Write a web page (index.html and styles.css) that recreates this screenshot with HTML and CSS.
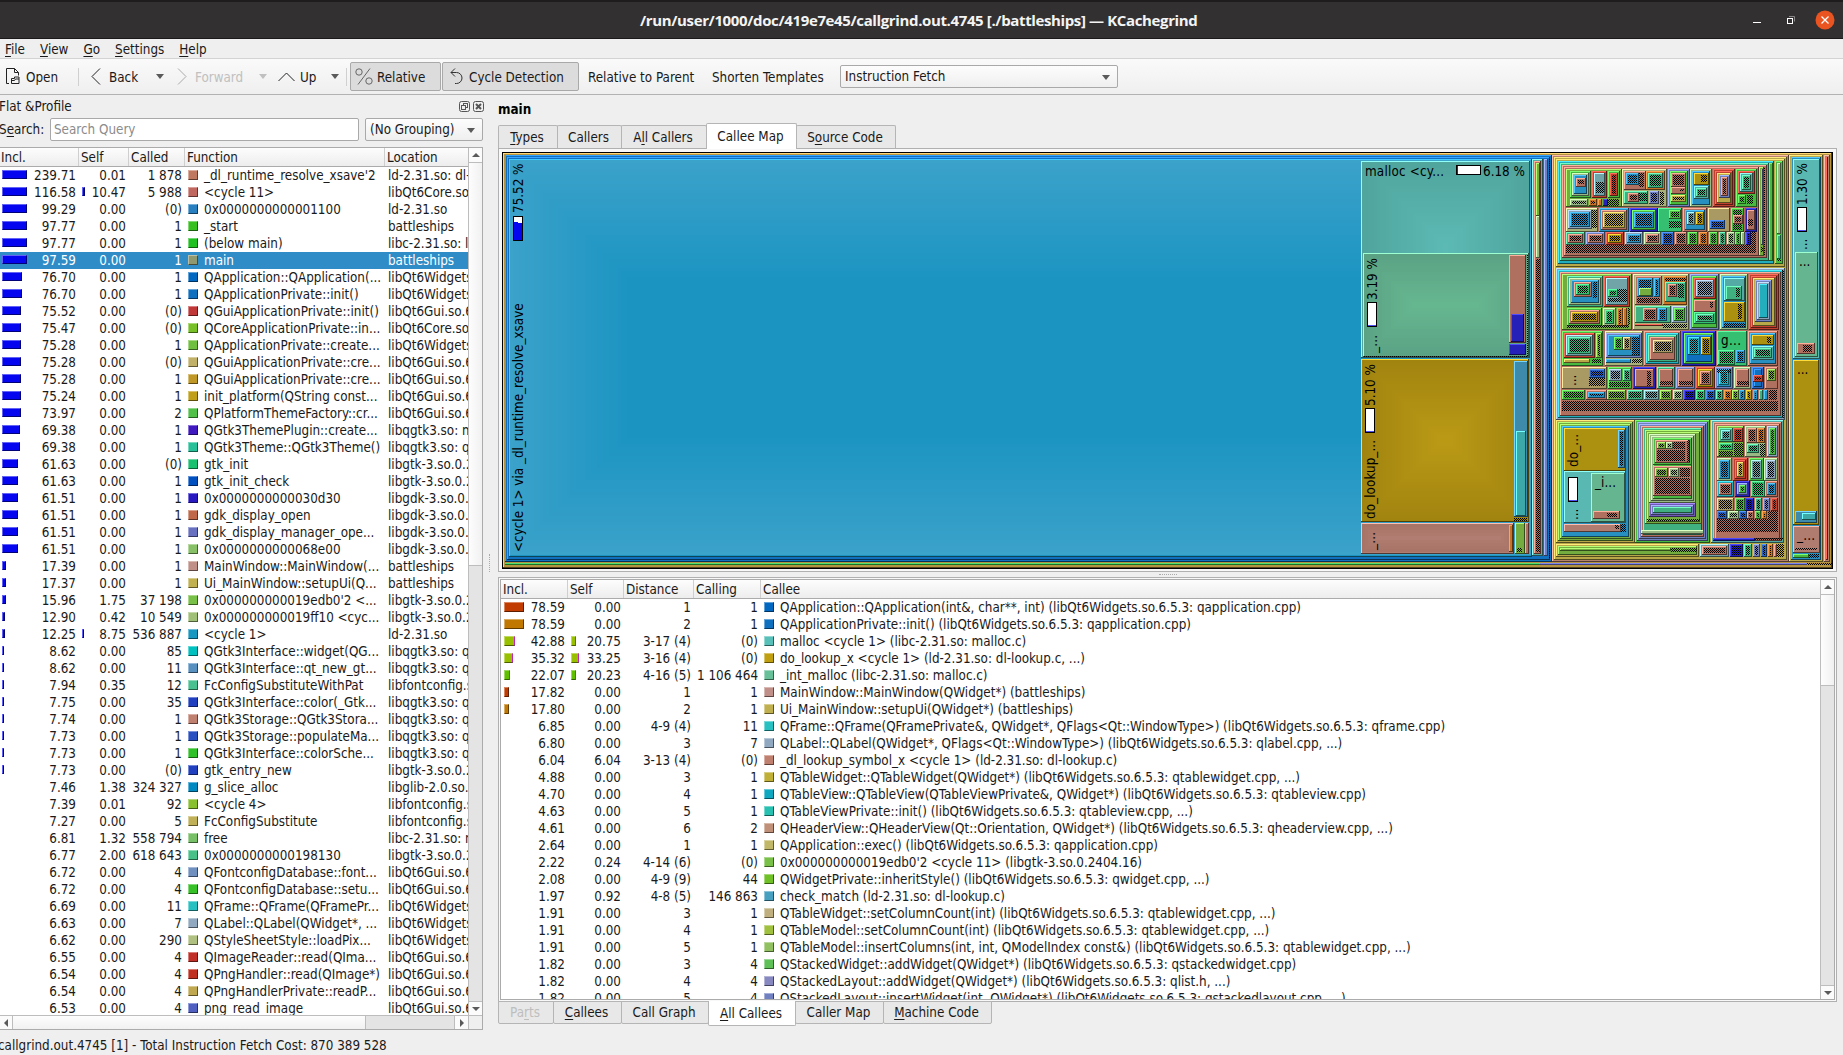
FILE: index.html
```html
<!DOCTYPE html>
<html lang="en">
<head>
<meta charset="utf-8">
<title>KCachegrind</title>
<link rel="stylesheet" href="styles.css">
</head>
<body>
<header class="titlebar">
  <h1 class="title">/run/user/1000/doc/419e7e45/callgrind.out.4745 [./battleships] — KCachegrind</h1>
  <svg class="winbtns" width="90" height="38" viewBox="0 0 90 38">
    <path d="M0 22.500h8" stroke="#fff"/>
    <path d="M36 16.500h5.500v5" fill="none" stroke="#8a8888"/>
    <rect x="34.500" y="18.500" width="5" height="5" fill="none" stroke="#fff"/>
    <circle cx="72" cy="20" r="9.500" fill="#e95420"/>
    <path d="M68.500 16.500l7 7m0-7l-7 7" stroke="#fff" stroke-width="1.300"/>
  </svg>
</header>
<nav class="menubar"><span><u>F</u>ile</span><span><u>V</u>iew</span><span><u>G</u>o</span><span><u>S</u>ettings</span><span><u>H</u>elp</span></nav>
<div class="toolbar">
  <div class="tool open"><svg width="16" height="17" viewBox="0 0 16 17" fill="none" stroke="#222"><path d="M4 15.500H1.500V.500h8l4 4v3M9.500.500v4h4"/><path d="M6.500 15.500v-5h3v-1.500h4.500v6.500zM6.500 12.500h3l1-1.500h3.500" /></svg><span>Open</span></div>
  <i class="sep"></i>
  <div class="tool back"><svg width="10" height="17" viewBox="0 0 10 17" fill="none" stroke="#222"><path d="M9 .500L1 8.500l8 8"/></svg><span>Back</span><i class="caret"></i></div>
  <div class="tool fwd"><svg width="10" height="17" viewBox="0 0 10 17" fill="none" stroke="#aaa"><path d="M1 .500l8 8-8 8"/></svg><span>Forward</span><i class="caret"></i></div>
  <div class="tool up"><svg width="17" height="10" viewBox="0 0 17 10" fill="none" stroke="#222"><path d="M.500 9l8-8 8 8"/></svg><span>Up</span><i class="caret"></i></div>
  <i class="sep s2"></i>
  <div class="tool pressed rel"><svg width="18" height="17" viewBox="0 0 18 17" fill="none" stroke="#666"><circle cx="4" cy="4" r="3.200"/><circle cx="14" cy="13" r="3.200"/><path d="M15 .500L3 16.500"/></svg><span>Relative</span></div>
  <div class="tool pressed cyc"><svg width="14" height="17" viewBox="0 0 14 17" fill="none" stroke="#333"><path d="M5 .500L1 4.500l4 4M1 4.500h5.500a5.500 5.500 0 0 1 0 11H5"/></svg><span>Cycle Detection</span></div>
  <div class="tool rtp"><span>Relative to Parent</span></div>
  <div class="tool sht"><span>Shorten Templates</span></div>
  <div class="combo fetch">Instruction Fetch<i class="caret"></i></div>
</div>
<main class="work">
  <section class="dock">
    <div class="dock-title"><span>Flat &amp;Profile</span>
      <svg width="26" height="12" viewBox="0 0 26 12" fill="none" stroke="#555"><rect x=".500" y=".500" width="10" height="10" rx="2"/><rect x="4.500" y="2.500" width="4" height="4"/><rect x="2.500" y="4.500" width="4" height="4" fill="#efefef"/><rect x="14.500" y=".500" width="10" height="10" rx="2"/><path d="M17 3l5 5m0-5l-5 5" stroke-width="2"/></svg></div>
    <div class="search"><label>S<u>e</u>arch:</label><div class="field">Search Query</div><div class="combo group">(No Grouping)<i class="caret"></i></div></div>
    <div class="list flat">
      <div class="listbody">
        <div class="head"><span>Incl.</span><span>Self</span><span>Called</span><span>Function</span><span>Location</span></div>
        <div class="rows" id="flat"></div>
      </div>
      <div class="vbar"><b class="btn up"></b><b class="handle"></b><b class="groove"></b><b class="btn dn"></b></div>
      <div class="hbar"><b class="btn lf"></b><b class="handle"></b><b class="groove"></b><b class="btn rt"></b></div>
      <div class="corner"></div>
    </div>
  </section>
  <div class="vsplit"></div>
  <section class="side">
    <h2>main</h2>
    <div class="tabs top"><span><u>T</u>ypes</span><span>Callers</span><span>A<u>l</u>l Callers</span><span class="on">Callee Map</span><span>S<u>o</u>urce Code</span></div>
    <div class="pane"><svg id="map" width="1331" height="417" viewBox="502 152 1331 417" shape-rendering="crispEdges"></svg></div>
    <div class="hsplit"></div>
    <div class="pane low">
      <div class="list callees">
        <div class="listbody">
          <div class="head"><span>Incl.</span><span>Self</span><span>Distance</span><span>Calling</span><span>Callee</span></div>
          <div class="rows" id="callees"></div>
        </div>
        <div class="vbar"><b class="btn up"></b><b class="handle"></b><b class="groove"></b><b class="btn dn"></b></div>
      </div>
    </div>
    <div class="tabs bottom"><span class="off">Pa<u>r</u>ts</span><span><u>C</u>allees</span><span>Call Graph</span><span class="on"><u>A</u>ll Callees</span><span>Caller Map</span><span><u>M</u>achine Code</span></div>
  </section>
</main>
<footer class="status">callgrind.out.4745 [1] - Total Instruction Fetch Cost: 870 389 528</footer>
<script src="app.js"></script>
</body>
</html>
```
FILE: styles.css
```css
* { box-sizing: border-box; }
body {
  margin: 0; width: 1843px; height: 1055px; overflow: hidden;
  display: flex; flex-direction: column;
  background: #efefef; color: #1a1a1a;
  font: 13.33px/16px "DejaVu Sans Condensed", "DejaVu Sans", sans-serif;
  font-stretch: condensed; white-space: nowrap;
}
h1, h2 { margin: 0; }
u { text-underline-offset: 2px; text-decoration-thickness: 1px; }

.titlebar {
  height: 39px; flex: none; display: flex; align-items: center; justify-content: flex-end;
  background: #333031; border-top: 2px solid #1f1c1d; border-bottom: 1px solid #1b1919;
}
.title { width: 557px; margin-right: 556px; color: #f4f4f4; font: bold 15px/20px "Open Sans", "Noto Sans", sans-serif; letter-spacing: -0.37px; }
.winbtns { margin: -2px 0 0; width: 90px; }

.menubar { height: 20px; flex: none; display: flex; gap: 15px; padding: 3px 5px 0; border-bottom: 1px solid #d3d3d3; }

.toolbar {
  height: 36px; flex: none; display: flex; align-items: center;
  background: linear-gradient(#fafafa, #efefef); border-bottom: 1px solid #b2b2b2;
}
.tool { display: flex; align-items: center; height: 29px; }
.tool span { padding-top: 2px; }
.tool svg { flex: none; }
.open { margin-left: 5px; width: 73px; gap: 5px; }
.sep { width: 1px; height: 18px; background: #d0d0d0; }
.back { width: 98px; padding-left: 12px; gap: 8px; }
.back .caret { margin-left: 10px; }
.fwd { width: 101px; gap: 8px; color: #c0c0c0; }
.fwd .caret { margin-left: 8px; border-top-color: #c0c0c0; }
.up.tool { width: 68px; gap: 5px; }
.up .caret { margin-left: 10px; }
.caret { width: 0; height: 0; border: 4px solid transparent; border-top: 5px solid #5a5a5a; border-bottom: 0; }
.pressed { background: #dcdcdc; border: 1px solid #a9a9a9; border-radius: 2px; }
.rel { margin-left: 3px; width: 91px; padding-left: 4px; gap: 4px; }
.cyc { margin-left: 1px; width: 137px; padding-left: 7px; gap: 5px; }
.rtp { margin-left: 9px; width: 124px; }
.sht { width: 128px; }
.combo {
  display: flex; align-items: center; justify-content: space-between; height: 23px; padding: 1px 7px 0 4px;
  border: 1px solid #a9a9a9; border-radius: 2px; background: linear-gradient(#fdfdfd, #efefef);
}
.fetch { width: 278px; }

.work { flex: 1; min-height: 0; display: flex; }
.dock { width: 484px; flex: none; display: flex; flex-direction: column; }
.dock-title { height: 23px; display: flex; justify-content: space-between; align-items: center; margin-left: -1px; margin-right: -1px; }
.search { height: 23px; display: flex; align-items: center; }
.search label { width: 50px; flex: none; margin-left: -1px; }
.field { width: 309px; height: 23px; margin-left: 1px; margin-right: 6px; padding: 3px; border: 1px solid #a9a9a9; border-radius: 2px; background: #fff; color: #8c8c8c; }
.group { width: 118px; }

.list { display: grid; grid-template-columns: 1fr 14px; background: #fff; border: 1px solid #ababab; }
.listbody { overflow: hidden; min-width: 0; min-height: 0; }
.flat { margin-top: 6px; width: 483px; height: 883px; border-left: 0; grid-template-rows: 867px 14px; }
.head { display: grid; height: 19px; background: linear-gradient(#fdfdfd, #ededed); border-bottom: 1px solid #ababab; }
.head span { padding: 2px 0 0 2px; border-right: 1px solid #cfcfcf; }
.head span:last-child { border: 0; }
.flat .head { grid-template-columns: 79px 50px 56px 200px 1fr; }
.flat .head span:first-child { padding-left: 1px; }
.rows { overflow: hidden; }
.row { display: grid; height: 17px; align-items: start; }
.row > span { overflow: hidden; height: 17px; padding-top: 1px; }
.row .num { display: flex; justify-content: space-between; padding: 1px 3px 0 2px; }
.flat .row { grid-template-columns: 79px 50px 56px 200px 1fr; }
.flat .row .loc { padding-left: 3px; }
.flat .num { padding-left: 2px; }
.flat .num + .num { padding-left: 3px; }
.row .fn { display: flex; gap: 6px; padding-left: 3px; }
.chip, .bar { display: block; flex: none; margin-top: 2px; height: 10px; border: 1px solid; border-color: #ffffff60 #00000080 #00000080 #ffffff60; }
.chip { width: 10px; }
.bar { height: 9px; }
.row.sel { background: #308cc6; color: #fff; }

.vbar, .hbar { display: flex; background: #e4e4e4; }
.vbar { flex-direction: column; border-left: 1px solid #bdbdbd; }
.hbar { border-top: 1px solid #bdbdbd; }
.corner { background: #efefef; border: solid #bdbdbd; border-width: 1px 0 0 1px; }
.btn, .vbar .handle, .hbar .handle { background: #fbfbfb; }
.btn { display: flex; align-items: center; justify-content: center; flex: none; width: 14px; height: 14px; }
.btn::after { content: ""; border: 4px solid transparent; }
.btn.up::after { border-top: 0; border-bottom: 4px solid #5a5a5a; }
.btn.dn::after { border-bottom: 0; border-top: 4px solid #5a5a5a; }
.btn.lf::after { border-left: 0; border-right: 4px solid #5a5a5a; }
.btn.rt::after { border-right: 0; border-left: 4px solid #5a5a5a; }
.vbar .btn { width: 13px; }
.vbar .handle { border: solid #bdbdbd; border-width: 1px 0; background: linear-gradient(90deg, #fdfdfd, #f1f1f1); }
.hbar .handle { border: solid #bdbdbd; border-width: 0 1px; background: linear-gradient(#fdfdfd, #f1f1f1); width: 354px; }
.hbar .btn { height: 13px; }
.hbar .btn.lf { width: 12px; }
.hbar .btn.rt { border-left: 1px solid #bdbdbd; }
.groove { flex: 1; }
.btn.dn { border-top: 1px solid #bdbdbd; }
.flat .handle { flex: none; }
.flat .vbar .handle { height: 404px; }

.vsplit { width: 14px; display: flex; align-items: center; justify-content: center; }
.vsplit::after { content: ""; height: 18px; border-left: 1px dotted #aaa; margin: 0 0 0 -4px; }

.side { width: 1339px; display: flex; flex-direction: column; }
.side h2 { height: 28px; padding: 7px 0 0; font-size: 13.33px; line-height: 16px; color: #000; }
.tabs { display: flex; flex: none; }
.tabs span { border: 1px solid #b5b5b5; background: #e8e8e8; text-align: center; margin-right: -1px; padding-right: 2px; }
.tabs .on { background: #fff; position: relative; }
.tabs.top { height: 25px; align-items: flex-end; }
.tabs.top span { height: 23px; padding-top: 4px; border-radius: 2px 2px 0 0; border-bottom: 0; }
.tabs.top .on { height: 26px; margin-bottom: -1px; padding-top: 5px; }
.tabs.top span:nth-child(1) { width: 60px; }
.tabs.top span:nth-child(2) { width: 65px; }
.tabs.top span:nth-child(3) { width: 86px; }
.tabs.top span:nth-child(4) { width: 91px; }
.tabs.top span:nth-child(5) { width: 100px; }
.pane { flex: none; border: 1px solid #b0b0b0; background: #f8f8f8; height: 424px; padding: 3px; }
#map { display: block; font: 13.33px "DejaVu Sans Condensed", "DejaVu Sans", sans-serif; font-stretch: condensed; }
.hsplit { height: 5px; display: flex; justify-content: center; align-items: center; }
.hsplit::after { content: ""; width: 18px; border-top: 1px dotted #aaa; }
.low { height: 425px; padding: 1px; }
.callees { height: 421px; width: 1335px; }
.callees .head { grid-template-columns: 67px 56px 70px 67px 1fr; }
.callees .row { grid-template-columns: 67px 56px 70px 67px 1fr; }
.callees .rows { height: 400px; }
.callees .handle { height: 92px; flex: none; }
.callees .num { padding: 1px 3px 0; }
.callees .bar { height: 10px; }
.callees .bar.edge { border-right-color: #c020c0; }
.tabs.bottom { height: 24px; align-items: flex-start; margin-top: -1px; }
.tabs.bottom span { height: 23px; padding-top: 3px; border-radius: 0 0 2px 2px; }
.tabs.bottom .on { height: 25px; border-top: 0; padding-top: 5px; }
.tabs.bottom .off { color: #bebebe; }
.tabs.bottom span:nth-child(1) { width: 56px; }
.tabs.bottom span:nth-child(2) { width: 69px; }
.tabs.bottom span:nth-child(3) { width: 88px; }
.tabs.bottom span:nth-child(4) { width: 88px; }
.tabs.bottom span:nth-child(5) { width: 89px; }
.tabs.bottom span:nth-child(6) { width: 109px; }

.status { height: 25px; flex: none; padding-top: 8px; margin-left: -2px; }
```
FILE: app.js
```js
// Flat profile: incl | self | called | colour | function | location
const flat = `239.71|0.01|1 878|c07860|_dl_runtime_resolve_xsave'2|ld-2.31.so: dl-
116.58|10.47|5 988|c06860|<cycle 11>|libQt6Core.so
99.29|0.00|(0)|2880c0|0x0000000000001100|ld-2.31.so
97.77|0.00|1|38c020|_start|battleships
97.77|0.00|1|20c020|(below main)|libc-2.31.so: l
97.59|0.00|1|909870|main|battleships
76.70|0.00|1|0068c0|QApplication::QApplication(...|libQt6Widgets
76.70|0.00|1|1070c0|QApplicationPrivate::init()|libQt6Widgets
75.52|0.00|(0)|c03838|QGuiApplicationPrivate::init()|libQt6Gui.so.6
75.47|0.00|(0)|78c028|QCoreApplicationPrivate::in...|libQt6Core.so
75.28|0.00|1|70c040|QApplicationPrivate::create...|libQt6Widgets
75.28|0.00|(0)|c0b068|QGuiApplicationPrivate::cre...|libQt6Gui.so.6
75.28|0.00|1|c09828|QGuiApplicationPrivate::cre...|libQt6Gui.so.6
75.24|0.00|1|c0a018|init_platform(QString const...|libQt6Gui.so.6
73.97|0.00|2|50c048|QPlatformThemeFactory::cr...|libQt6Gui.so.6
69.38|0.00|1|4018c0|QGtk3ThemePlugin::create...|libqgtk3.so: m
69.38|0.00|1|28c098|QGtk3Theme::QGtk3Theme()|libqgtk3.so: q
61.63|0.00|(0)|18c070|gtk_init|libgtk-3.so.0.2
61.63|0.00|1|0050c0|gtk_init_check|libgtk-3.so.0.2
61.51|0.00|1|2818c0|0x0000000000030d30|libgdk-3.so.0.
61.51|0.00|1|c06848|gdk_display_open|libgdk-3.so.0.
61.51|0.00|1|6870c0|gdk_display_manager_ope...|libgdk-3.so.0.
61.51|0.00|1|88c068|0x0000000000068e00|libgdk-3.so.0.
17.39|0.00|1|c09088|MainWindow::MainWindow(...|battleships
17.37|0.00|1|c0b050|Ui_MainWindow::setupUi(Q...|battleships
15.96|1.75|37 198|78c048|0x000000000019edb0'2 <...|libgtk-3.so.0.2
12.90|0.42|10 549|a0c078|0x000000000019ff10 <cyc...|libgtk-3.so.0.2
12.25|8.75|536 887|1898c0|<cycle 1>|ld-2.31.so
8.62|0.00|85|00c0c0|QGtk3Interface::widget(QG...|libqgtk3.so: q
8.62|0.00|11|5890c0|QGtk3Interface::qt_new_gt...|libqgtk3.so: q
7.94|0.35|12|48c090|FcConfigSubstituteWithPat|libfontconfig.s
7.75|0.00|35|2040c0|QGtk3Interface::color(_Gtk...|libqgtk3.so: q
7.74|0.00|1|c08070|QGtk3Storage::QGtk3Stora...|libqgtk3.so: q
7.73|0.00|1|2850c0|QGtk3Storage::populateMa...|libqgtk3.so: q
7.73|0.00|1|30c028|QGtk3Interface::colorSche...|libqgtk3.so: q
7.73|0.00|(0)|2040c0|gtk_entry_new|libgtk-3.so.0.2
7.46|1.38|324 327|0088c0|g_slice_alloc|libglib-2.0.so.
7.39|0.01|92|88c030|<cycle 4>|libfontconfig.s
7.27|0.00|5|c0b058|FcConfigSubstitute|libfontconfig.s
6.81|1.32|558 794|78c068|free|libc-2.31.so: m
6.77|2.00|618 643|48c088|0x0000000000198130|libgtk-3.so.0.2
6.72|0.00|4|7090c0|QFontconfigDatabase::font...|libQt6Gui.so.6
6.72|0.00|4|38c028|QFontconfigDatabase::setu...|libQt6Gui.so.6
6.69|0.00|11|28c0c0|QFrame::QFrame(QFramePr...|libQt6Widgets
6.63|0.00|7|90a8c0|QLabel::QLabel(QWidget*, ...|libQt6Widgets
6.62|0.00|290|b0c080|QStyleSheetStyle::loadPix...|libQt6Widgets
6.55|0.00|4|c03028|QImageReader::read(QIma...|libQt6Gui.so.6
6.54|0.00|4|c03020|QPngHandler::read(QImage*)|libQt6Gui.so.6
6.54|0.00|4|c0a850|QPngHandlerPrivate::readP...|libQt6Gui.so.6
6.53|0.00|4|5060c0|png_read_image|libQt6Gui.so.6`;

// All callees: incl | self | distance | calling | colour | callee | bar colour
const callees = `78.59|0.00|1|1|0068c0|QApplication::QApplication(int&, char**, int) (libQt6Widgets.so.6.5.3: qapplication.cpp)|c03c00
78.59|0.00|2|1|1070c0|QApplicationPrivate::init() (libQt6Widgets.so.6.5.3: qapplication.cpp)|c07800
42.88|20.75|3-17 (4)|(0)|58c0b8|malloc <cycle 1> (libc-2.31.so: malloc.c)|98c000
35.32|33.25|3-16 (4)|(0)|c0a010|do_lookup_x <cycle 1> (ld-2.31.so: dl-lookup.c, ...)|98c000
22.07|20.23|4-16 (5)|1 106 464|68c098|_int_malloc (libc-2.31.so: malloc.c)|60c000
17.82|0.00|1|1|c09088|MainWindow::MainWindow(QWidget*) (battleships)|c03c00
17.80|0.00|2|1|c0b050|Ui_MainWindow::setupUi(QWidget*) (battleships)|c07800
6.85|0.00|4-9 (4)|11|28c0c0|QFrame::QFrame(QFramePrivate&, QWidget*, QFlags<Qt::WindowType>) (libQt6Widgets.so.6.5.3: qframe.cpp)
6.80|0.00|3|7|90a8c0|QLabel::QLabel(QWidget*, QFlags<Qt::WindowType>) (libQt6Widgets.so.6.5.3: qlabel.cpp, ...)
6.04|6.04|3-13 (4)|(0)|c08070|_dl_lookup_symbol_x <cycle 1> (ld-2.31.so: dl-lookup.c)
4.88|0.00|3|1|c0b038|QTableWidget::QTableWidget(QWidget*) (libQt6Widgets.so.6.5.3: qtablewidget.cpp, ...)
4.70|0.00|4|1|10a8c0|QTableView::QTableView(QTableViewPrivate&, QWidget*) (libQt6Widgets.so.6.5.3: qtableview.cpp)
4.63|0.00|5|1|28c0b0|QTableViewPrivate::init() (libQt6Widgets.so.6.5.3: qtableview.cpp, ...)
4.61|0.00|6|2|c09078|QHeaderView::QHeaderView(Qt::Orientation, QWidget*) (libQt6Widgets.so.6.5.3: qheaderview.cpp, ...)
2.64|0.00|1|1|c0b868|QApplication::exec() (libQt6Widgets.so.6.5.3: qapplication.cpp)
2.22|0.24|4-14 (6)|(0)|78c048|0x000000000019edb0'2 <cycle 11> (libgtk-3.so.0.2404.16)
2.08|0.00|4-9 (9)|44|70c028|QWidgetPrivate::inheritStyle() (libQt6Widgets.so.6.5.3: qwidget.cpp, ...)
1.97|0.92|4-8 (5)|146 863|48a0c0|check_match (ld-2.31.so: dl-lookup.c)
1.91|0.00|3|1|c0b080|QTableWidget::setColumnCount(int) (libQt6Widgets.so.6.5.3: qtablewidget.cpp, ...)
1.91|0.00|4|1|a0c040|QTableModel::setColumnCount(int) (libQt6Widgets.so.6.5.3: qtablewidget.cpp, ...)
1.91|0.00|5|1|90c060|QTableModel::insertColumns(int, int, QModelIndex const&) (libQt6Widgets.so.6.5.3: qtablewidget.cpp, ...)
1.82|0.00|3|4|60c058|QStackedWidget::addWidget(QWidget*) (libQt6Widgets.so.6.5.3: qstackedwidget.cpp)
1.82|0.00|4|4|8888c0|QStackedLayout::addWidget(QWidget*) (libQt6Widgets.so.6.5.3: qlist.h, ...)
1.82|0.00|5|4|7080c0|QStackedLayout::insertWidget(int, QWidget*) (libQt6Widgets.so.6.5.3: qstackedlayout.cpp, ...)`;

const esc = s => s.replace(/&/g, '&amp;').replace(/</g, '&lt;');
const bar = (v, color, edge) => {
  const w = Math.min(25, Math.round(v * 0.255));
  return v >= 7.6 && color ? `<i class="bar${edge ? ' edge' : ''}" style="width:${w}px;background:${color}"></i>` : '<i></i>';
};
document.getElementById('flat').innerHTML = flat.split('\n').map(l => {
  const [incl, self, called, color, fn, loc] = l.split('|');
  return `<div class="row${fn === 'main' ? ' sel' : ''}"><span class="num">${bar(+incl, '#0505f0')}${incl}</span><span class="num">${bar(+self, '#0505f0')}${self}</span><span class="num"><i></i>${called}</span><span class="fn"><i class="chip" style="background:#${color}"></i>${esc(fn)}</span><span class="loc">${loc}</span></div>`;
}).join('');
document.getElementById('callees').innerHTML = callees.split('\n').map(l => {
  const [incl, self, dist, calling, color, fn, b] = l.split('|');
  const c = b && '#' + b, edge = b && +self > 0;
  return `<div class="row"><span class="num">${bar(+incl, c, edge)}${incl}</span><span class="num">${bar(+self, c, edge)}${self}</span><span class="num"><i></i>${dist}</span><span class="num"><i></i>${calling}</span><span class="fn"><i class="chip" style="background:#${color}"></i>${esc(fn)}</span></div>`;
}).join('');

// ---- Callee map ----
const palette = {
  g: '#48b840', l: '#74ac40', L: '#98b884', y: '#b8a848', G: '#ac9010', s: '#b07060', r: '#c04030',
  o: '#c87428', b: '#2890c0', B: '#2420b8', c: '#22aebc', t: '#54aaa4', p: '#7080bc', e: '#40b080',
  v: '#a89a62', m: '#2864c0', k: '#88a0b8', A: '#b39340', D: '#1070c0', E: '#1b94c2', T: '#5ab8b3',
  N: '#65b690', S: '#b07c70', P: '#b5806c', q: '#70a4a8', w: '#a8b078', n: '#34c070', z: '#3d8aab',
  V: '#7058b8', C: '#3ca8a8'
};
const rgb = h => [1, 3, 5].map(i => parseInt(h.substr(i, 2), 16));
const hex = a => `rgb(${a.map(v => Math.round(Math.max(0, Math.min(255, v)))).join()})`;
const light = a => { const f = 255 / Math.max(...a); return a.map(v => v * f * 0.85 + 38); };
const out = ['<defs><pattern id="dots" width="2" height="2" patternUnits="userSpaceOnUse"><rect width="1" height="1"/><rect x="1" y="1" width="1" height="1"/></pattern></defs>'];
const rect = (x, y, w, h, f) => { if (w > 0 && h > 0) out.push(`<rect x="${x}" y="${y}" width="${w}" height="${h}" fill="${f}"/>`); };

function box(x0, y0, x1, y1, chain) {
  for (const k of chain) {
    if (k === '#') { rect(x0, y0, x1 - x0, y1 - y0, 'url(#dots)'); break; }
    if (x1 - x0 < 2 || y1 - y0 < 2) break;
    const c = rgb(palette[k]);
    rect(x0, y0, x1 - x0, y1 - y0, hex(c.map(v => v * 0.45)));
    rect(x0, y0, x1 - x0 - 1, y1 - y0 - 1, hex(light(c)));
    rect(x0 + 1, y0 + 1, x1 - x0 - 2, y1 - y0 - 2, hex(c));
    x0 += 2; y0 += 2; x1 -= 2; y1 -= 2;
  }
}
// Tiles are given as "left top right bottom colours", in thirds of a pixel from an origin.
function tiles(ox, oy, text) {
  for (const t of text.trim().split(/[;\n]+/)) {
    const p = t.trim().split(/\s+/);
    if (p.length < 5) continue;
    const v = p.slice(0, 4).map((n, i) => Math.round(n / 3) + (i % 2 ? oy : ox));
    box(...v, p[4]);
  }
}
// Cells of one strip: "left right colours"
function strip(ox, oy, y0, y1, text) {
  tiles(ox, oy, text.split(';').map(s => { const p = s.trim().split(/\s+/); return `${p[0]} ${y0} ${p[1]} ${y1} ${p[2]}`; }).join(';'));
}
function shade(x0, y0, x1, y1, from, to, reach) {
  const a = rgb(from), b = rgb(to), n = Math.floor(Math.min(reach, (x1 - x0) / 2, (y1 - y0) / 2));
  for (let d = 0; d < n; d += 3) {
    const t = Math.min(1, d / n);
    rect(x0 + d, y0 + d, x1 - x0 - 2 * d, y1 - y0 - 2 * d, hex(a.map((v, i) => v + (b[i] - v) * t)));
  }
}

rect(502, 152, 1331, 417, '#000');
box(503, 153, 1832, 568, 'A');
rect(505, 563, 1035, 1, '#50e070'); rect(505, 564, 1035, 1, '#187020');
rect(1540, 563, 267, 1, '#8088f0'); rect(1540, 564, 267, 1, '#404078');
rect(1807, 563, 25, 2, 'url(#dots)');
box(505, 155, 1552, 562, 'D'); box(507, 157, 1550, 560, 'D');
box(509, 159, 1532, 557, 'E');
shade(510, 160, 1531, 555, '#3ba2ca', '#1b94c2', 120);
tiles(1330, 140, `
93 63 600 655 T
606 57 640 1249 ts; 618 69 630 227 l; 618 228 630 355 L; 618 356 629 1235 #
642 57 654 1249 p; 657 57 660 1258 #
93 657 598 1147 G; 93 1149 553 1241 S; 555 1149 585 1241 l; 560 1223 577 1236 #; 585 1149 598 1241 s`);
shade(1362, 162, 1529, 357, '#50a59d', '#5cbab5', 90);
tiles(1330, 140, '99 339 597 651 N');
shade(1364, 254, 1527, 356, '#5ba284', '#66b891', 60);
tiles(1330, 140, '591 342 594 651 #; 99 648 594 651 #; 537 345 588 609 s; 543 522 582 606 B; 537 612 588 645 B');
shade(1362, 360, 1528, 521, '#a18410', '#bb9a15', 85);
shade(1362, 524, 1513, 552, '#a87468', '#b27d72', 14);
tiles(1330, 140, '552 663 594 1131 z; 558 873 588 1128 C; 552 1133 592 1143 #; 537 1155 549 1236 o');

tiles(1540, 145, `
36 30 748 1252 Py
48 42 735 367 y; 54 48 703 357 c; 705 48 728 357 g; 711 54 722 268 L; 711 270 722 343 e; 711 343 722 349 #
60 54 686 349 e; 687 54 699 349 g; 66 60 680 340 s; 72 66 656 332 s; 657 66 673 332 l; 663 72 669 300 p; 673 66 676 332 #; 663 305 669 320 #
78 300 649 325 #
78 72 245 187 l; 90 78 154 160 gLb; 107 98 138 126 s; 113 105 131 118 #; 156 78 202 160 rq; 168 110 191 145 #; 204 78 240 160 gr#; 90 162 145 182 L#; 147 162 172 182 o#; 174 162 187 182 o; 189 162 203 182 B; 205 163 238 182 #
247 72 380 187 w; 253 78 317 136 s; 258 84 297 120 b#; 298 84 312 125 #; 318 78 375 136 oe#; 253 138 325 176 e; 264 144 296 170 s#; 297 145 320 168 #; 327 138 357 176 p#; 360 140 372 180 #
384 72 449 187 pg; 393 84 438 125 s#; 393 127 438 147 s; 420 132 432 138 #; 393 149 438 172 y#
451 72 517 187 Lb; 462 84 506 120 G; 482 90 500 110 #; 462 122 506 162 te#
519 72 586 187 rry; 538 90 570 160 ps#
588 72 650 187 g; 594 78 644 147 rte#; 594 149 618 178 g#; 620 150 640 178 #`);
strip(1540, 145, 189, 260, '78 175 w;177 268 bsy#;269 353 Bgb#;355 427 n;429 502 sb;504 571 v;573 613 g#;615 650 Bs');
tiles(1540, 145, `84 195 157 252 kb#; 157 195 170 250 #; 387 195 422 223 g#; 387 228 422 250 #; 441 202 465 240 q#; 467 202 492 240 G#; 509 225 555 252 m#; 579 210 608 236 s#; 624 222 638 242 #`);
strip(1540, 145, 261, 299, '78 136 es#;138 196 ps#;198 253 rG#;255 310 kb#;312 364 Ls#;366 403 m#;405 441 s#;443 474 g#;476 505 o#;507 535 g#;537 559 e#;561 585 L#;586 602 g#;603 616 L;618 634 B#;634 649 #');

tiles(1540, 145, `
48 369 735 824 kcs
727 375 732 820 #; 66 768 714 798 #
66 387 277 555 l; 80 393 190 487 eLb; 101 411 157 455 sn#; 158 411 170 460 #; 192 393 271 487 rq; 204 432 233 457 n#; 235 432 260 470 #; 204 459 260 470 #; 80 489 187 542 gsG#; 190 489 228 542 Ln#; 231 489 249 542 o#; 250 489 262 542 o; 80 541 268 550 #; 263 489 271 541 #
279 387 448 555 w; 285 393 367 480 s; 291 399 339 457 b#; 341 399 361 457 b#; 297 430 335 452 l; 291 459 361 473 #; 369 393 442 480 o; 375 398 437 408 #; 375 410 437 470 e; 384 416 412 455 s#; 414 416 432 460 #; 285 484 393 534 e; 310 489 351 528 s#; 354 489 380 528 b#; 396 484 441 534 kg#; 285 537 370 543 r; 370 537 441 550 #
450 387 538 555 pg; 462 399 528 462 rk#; 462 464 528 500 s; 510 470 520 490 #; 462 502 528 537 ne#
540 387 625 555 Lb; 552 399 614 468 t; 558 423 607 465 e; 588 428 600 455 #; 552 471 614 532 G; 594 477 606 523 #; 552 534 614 545 #
627 387 716 555 rry; 646 405 695 530 pkc`);
strip(1540, 145, 558, 664, '66 190 g;195 310 w;312 422 sces;425 528 BgD;530 622 n;625 714 sb');
tiles(1540, 145, `72 564 165 640 rqe#; 168 564 187 640 l#; 72 642 150 655 y; 155 642 183 655 #
197 564 306 640 pb; 222 576 248 615 g#; 250 576 274 615 v#; 276 576 298 630 #; 197 642 274 654 b; 276 642 306 655 #
340 585 400 625 v#; 445 576 481 630 c#; 483 576 512 630 G#; 535 615 585 660 n#; 587 615 615 655 b#; 636 570 702 600 G; 680 575 694 593 #; 636 603 702 645 te#`);
strip(1540, 145, 665, 733, '66 201 v;203 277 g;279 347 Bs;350 406 es;408 465 ps;467 524 rGs#;526 580 pbc#;582 634 Ls;636 673 mD;675 714 s');
tiles(1540, 145, `147 672 194 700 m#; 147 700 194 722 #; 208 671 247 708 k#; 249 671 272 708 e#; 208 710 270 726 #; 322 678 334 722 #; 360 708 400 720 #; 416 708 458 720 #; 592 708 626 720 #; 640 690 668 712 r#; 680 672 708 708 l#; 532 672 574 684 #`);
strip(1540, 145, 735, 766, '66 136 g#;138 200 sb#;201 258 l#;260 310 e#;312 358 q#;360 397 l#;399 430 L#;432 465 B#;467 496 n#;498 525 m#;527 550 e#;552 575 o#;577 597 l#;598 616 b#;618 637 G#;639 655 b#;656 670 e;671 685 b;686 712 #');

// lower groups
tiles(1540, 350, `
48 209 284 579 yllb; 72 234 258 362 G; 234 240 255 353 z#; 72 363 258 520 T; 153 369 256 516 N; 159 483 240 508 s; 200 488 232 502 #; 72 521 243 546 S; 225 526 238 536 #; 244 523 258 546 #
285 209 511 579 gppse; 303 540 492 553 L; 315 240 486 522 ll; 320 506 480 514 #
327 252 468 458 LLg; 339 264 456 346 gs; 351 276 377 297 l#; 378 276 398 297 L#; 400 276 435 297 #; 351 299 435 334 #; 440 270 450 335 #
339 348 456 438 s; 345 354 384 380 l#; 387 354 418 380 L#; 420 354 450 380 #; 345 384 450 432 #
327 459 468 500 Vpe
513 209 733 579 tss; 531 507 714 546 #; 519 564 645 572 B; 645 564 728 570 #; 716 228 720 550 P
531 228 613 322 l; 537 234 579 277 et#; 580 234 609 277 r#; 537 279 580 300 n#; 582 279 609 318 #; 537 302 580 318 #
615 228 679 322 L; 621 234 650 280 s#; 652 234 675 280 o#; 621 282 658 308 e#; 660 282 675 318 #
681 228 714 322 kg#`);
strip(1540, 350, 324, 392, '531 577 Lb#;579 625 rry#;627 671 gq#;673 714 Lk#');
strip(1540, 350, 393, 442, '531 583 cs#;585 631 Bpg#;633 674 n#;676 714 sb#');
strip(1540, 350, 443, 482, '531 583 v#;585 614 g#;616 643 B#;645 667 e#;669 691 p#;693 715 r#');
strip(1540, 350, 483, 506, '531 562 m#;564 596 L#;598 620 m#;622 643 s#;645 664 g#;666 682 o#;684 714 #');
tiles(1540, 350, '48 581 478 620 yl; 60 593 394 602 l; 394 593 472 606 #');
strip(1540, 350, 581, 620, '480 568 qs#;570 610 B#;612 637 e#;639 661 p#;663 682 m#;684 700 o#;702 711 s;712 733 #');
tiles(1540, 145, `
748 30 850 1252 yb
760 42 839 642 T; 766 322 833 636 N; 772 595 824 628 s; 790 600 815 620 #
759 645 838 1140 G; 766 1099 832 1134 z; 785 1104 828 1126 C
759 1143 839 1225 S; 765 1210 830 1216 #; 759 1227 806 1239 g; 806 1227 838 1239 #
851 30 869 1252 Pr; 870 30 874 1252 P`);

// labels and cost gauges
const label = (x, y, s, up, len) => out.push(`<text ${up ? `transform="translate(${x} ${y}) rotate(-90)"` : `x="${x}" y="${y}"`}${len ? ` textLength="${len}"` : ''}>${esc(s)}</text>`);
const gauge = (x, y, w, h) => { rect(x, y, w, h, '#000'); rect(x + 1, y + 1, w - 2, h - 2, '#fff'); };
gauge(513, 216, 10, 25); rect(514, 223, 8, 17, '#0505f0'); rect(514, 222, 4, 1, '#0505f0');
label(523, 213, '75.52 %', 1); label(523, 552, '<cycle 1> via _dl_runtime_resolve_xsave', 1);
gauge(1456, 165, 25, 10); rect(1457, 166, 1, 8, '#2020d0'); label(1365, 176, 'malloc <cy...', 0, 79); label(1483, 176, '6.18 %');
gauge(1367, 302, 10, 25); rect(1368, 325, 8, 1, '#5050f0'); label(1377, 300, '3.19 %', 1); label(1377, 353, '_...', 1, 18);
gauge(1365, 408, 10, 25); rect(1366, 431, 8, 1, '#5050f0'); label(1375, 406, '5.10 %', 1); label(1375, 519, 'do_lookup_...', 1, 79);
label(1375, 550, '_...', 1, 18);
gauge(1797, 207, 10, 25); rect(1798, 230, 8, 1, '#5050f0'); label(1807, 205, '1.30 %', 1); label(1807, 250, '...', 1);
label(1799, 266, '...'); label(1797, 374, '...'); label(1797, 540, '_...', 0, 18); label(1721, 345, 'g...', 0, 20);
gauge(1568, 477, 10, 25); rect(1569, 500, 8, 1, '#5050f0'); label(1578, 467, 'do_...', 1, 33); label(1578, 520, '...', 1);
label(1595, 487, '_i...', 0, 21); label(1576, 386, '...', 1);
document.getElementById('map').innerHTML = out.join('');
```
